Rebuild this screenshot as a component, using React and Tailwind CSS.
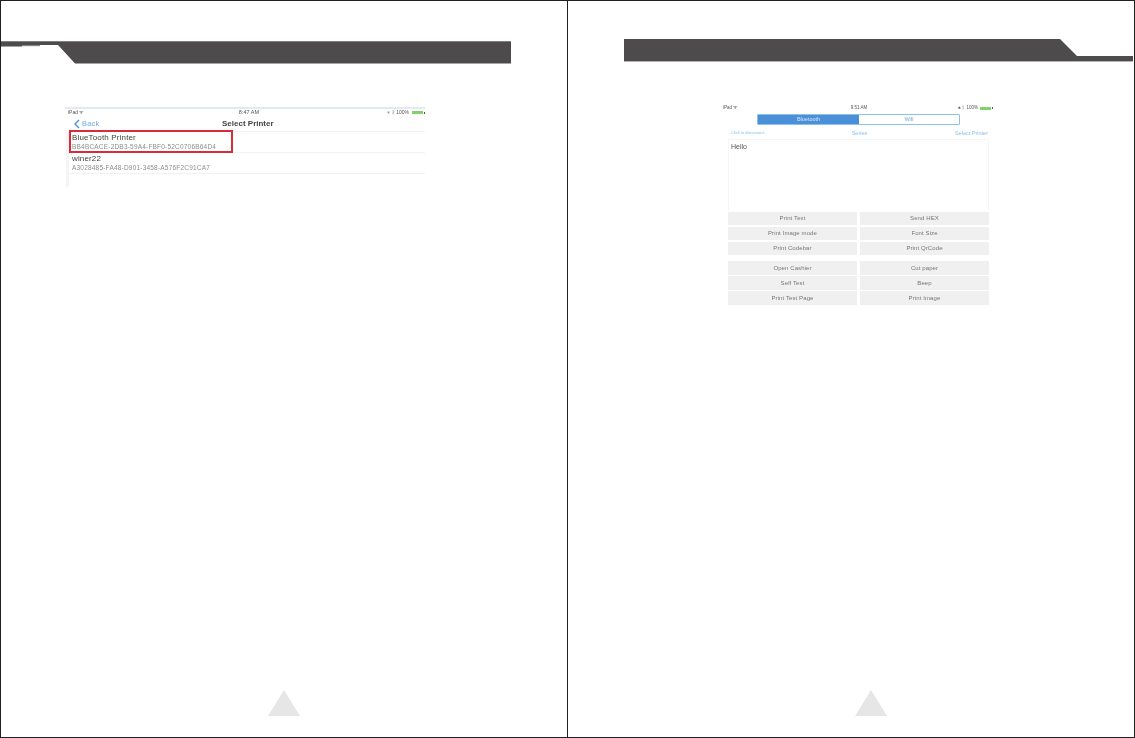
const font = { fontFamily: '"Liberation Sans", Arial, sans-serif' };

function Triangle() {
  return (
    <svg width="32" height="27" viewBox="0 0 32 27" className="block">
      <polygon points="16,0 32,26 0,26" fill="#e6e6e6" />
    </svg>
  );
}

function BandLeft() {
  return (
    <svg width="510" height="23" viewBox="0 0 510 23" className="block">
      <polygon points="0,0 510,0 510,22.5 74,22.5 57,4 39,4 39,4.7 21,4.7 21,5.5 0,5.5" fill="#4d4b4c" />
      <rect x="21" y="4.3" width="18" height="0.9" fill="#8f8d8e" />
      <rect x="0" y="0" width="510" height="0.6" fill="#a5a4a4" />
    </svg>
  );
}

function BandRight() {
  return (
    <svg width="510" height="23" viewBox="0 0 510 23" className="block">
      <polygon points="0,0 436,0 453,17 509,17 509,22 0,22" fill="#4d4b4c" />
      <rect x="0" y="22" width="509" height="1" fill="#b5b4b4" />
    </svg>
  );
}

function Battery() {
  return (
    <span className="flex items-center gap-px">
      <span className="block h-[3px] w-[11px] bg-[#7ed36a]" />
      <span className="block h-[2px] w-px bg-[#555]" />
    </span>
  );
}

function Row({ title, sub }) {
  return (
    <div className="h-[21px] border-b border-[#f1f1f1] pl-[3px] pt-px">
      <div className="text-[8px] leading-[10px] tracking-[0.15px] text-[#444]">{title}</div>
      <div className="text-[6.5px] leading-[8px] tracking-[0.2px] text-[#8d8d8d]">{sub}</div>
    </div>
  );
}

function LeftShot() {
  return (
    <div className="relative ml-[64px] mt-[43px] h-[80px] w-[360px] bg-white blur-[0.4px]">
      <div className="h-[2px] bg-[#e4e9ef]" />
      <div className="flex h-[7px] items-center justify-between pl-[3px] text-[5px] leading-[7px] text-[#555]">
        <span>iPad ᯤ</span>
        <span className="translate-x-[13px] text-[5.5px]">8:47 AM</span>
        <span className="flex items-center gap-[3px]"><span>◉ ᛒ 100%</span><Battery /></span>
      </div>
      <div className="flex h-[15px] items-center pl-[9px]">
        <svg width="6" height="10" viewBox="0 0 6 10" className="mr-[2px] block">
          <path d="M5 1 L1 5 L5 9" fill="none" stroke="#4a9be0" strokeWidth="1.5" />
        </svg>
        <span className="w-[140px] text-[7.5px] tracking-[0.2px] text-[#69aee5]">Back</span>
        <span className="text-[8px] font-bold text-[#444]">Select Printer</span>
      </div>
      <div className="ml-[4px] border-t border-[#f1f1f1]">
        <Row title="BlueTooth Printer" sub="BB4BCACE-2DB3-59A4-FBF0-52C0706B64D4" />
        <Row title="winer22" sub="A3028485-FA48-D901-3458-A576F2C91CA7" />
      </div>
      <div className="absolute left-px top-[25px] h-[55px] w-[3px] bg-[#f5f5f6]" />
      <div className="absolute left-[4px] top-[23px] h-[23px] w-[164px] border-2 border-[#d92b3a]" />
    </div>
  );
}

function Btn({ children }) {
  return (
    <div className="flex items-center justify-center bg-[#f0f0f0] text-[6px] tracking-[0.1px] text-[#777]">{children}</div>
  );
}

function RightShot() {
  return (
    <div className="ml-[155px] mt-[42px] w-[270px] bg-white blur-[0.4px]">
      <div className="flex h-[8px] items-center justify-between text-[4.5px] leading-[8px] text-[#555]">
        <span>iPad ᯤ</span>
        <span className="translate-x-[11px]">9:51 AM</span>
        <span className="flex items-center gap-[2px]"><span>✱ ᛒ 100%</span><Battery /></span>
      </div>
      <div className="ml-[34px] mt-[2px] flex h-[11px] w-[203px] rounded-[1px] border border-[#8fc0ea] text-[5.5px]">
        <div className="flex w-[101px] items-center justify-center bg-[#4a90d9] text-[#d5e6f6]">Bluetooth</div>
        <div className="flex flex-1 items-center justify-center text-[#69aee5]">Wifi</div>
      </div>
      <div className="ml-[8px] mr-[5px] mt-[5px] grid h-[6px] grid-cols-3 items-center text-[5px] leading-[6px] text-[#8cc0ea]">
        <span className="text-[4px]">Click to disconnect</span>
        <span className="text-center text-[5.5px]">Series</span>
        <span className="text-right text-[5.5px]">Select Printer</span>
      </div>
      <div className="ml-[5px] mt-[3px] h-[71px] w-[261px] border-x border-t border-[#f6f6f6] pl-[2px] pt-[2px] text-[7px] leading-[10px] text-[#555]">Hello</div>
      <div className="ml-[5px] mt-[2px] grid w-[261px] grid-cols-[129px_129px] grid-rows-[13px_13px_13px] gap-x-[3px] gap-y-[2px]">
        <Btn>Print Text</Btn><Btn>Send HEX</Btn>
        <Btn>Print Image mode</Btn><Btn>Font Size</Btn>
        <Btn>Print Codebar</Btn><Btn>Print QrCode</Btn>
      </div>
      <div className="ml-[5px] mt-[6px] grid w-[261px] grid-cols-[129px_129px] grid-rows-[14px_14px_14px] gap-x-[3px] gap-y-px">
        <Btn>Open Cashier</Btn><Btn>Cut paper</Btn>
        <Btn>Self Test</Btn><Btn>Beep</Btn>
        <Btn>Print Test Page</Btn><Btn>Print Image</Btn>
      </div>
    </div>
  );
}

export default function App() {
  return (
    <div className="flex h-[738px] w-[1135px] overflow-hidden border-y border-[#231f20] bg-white" style={font}>
      <div className="flex h-full w-[568px] shrink-0 flex-col border-x border-[#231f20]">
        <div className="mt-[40px]"><BandLeft /></div>
        <LeftShot />
        <div className="mt-auto flex justify-center pb-[20px]"><Triangle /></div>
      </div>
      <div className="flex h-full flex-1 flex-col border-r border-[#231f20]">
        <div className="ml-[56px] mt-[38px]"><BandRight /></div>
        <RightShot />
        <div className="mt-auto flex justify-center pb-[20px] pl-[40px]"><Triangle /></div>
      </div>
    </div>
  );
}
